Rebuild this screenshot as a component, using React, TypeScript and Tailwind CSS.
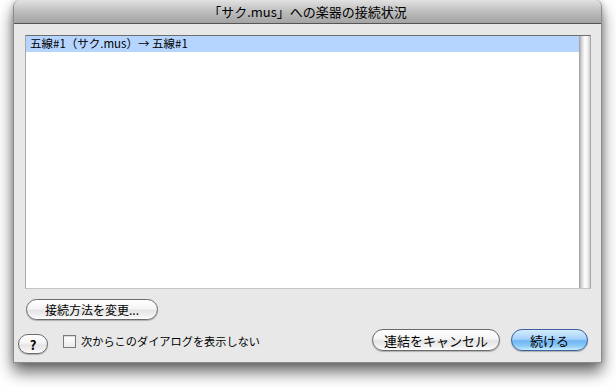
import React from "react";

const font = { fontFamily: '"Lucida Grande", "Noto Sans CJK JP", "Noto Sans", sans-serif' };

const AquaButton = ({
  children,
  className = "",
  primary = false,
}: {
  children: React.ReactNode;
  className?: string;
  primary?: boolean;
}) => (
  <button
    className={
      "flex items-center justify-center rounded-full border text-[12px] leading-none text-black shadow-[0_1px_1px_rgba(0,0,0,0.25)] " +
      (primary
        ? "border-[#3c5f9e] bg-[linear-gradient(to_bottom,#d4ecff_0%,#a6d2fb_45%,#6fb4f3_55%,#8ccaf8_80%,#c8eeff_100%)] "
        : "border-[#6b6b6b] bg-[linear-gradient(to_bottom,#ffffff_0%,#f4f4f4_45%,#e4e4e4_55%,#f2f2f2_85%,#ffffff_100%)] ") +
      className
    }
    style={font}
  >
    {children}
  </button>
);

export default function App() {
  return (
    <div className="h-[387px] w-[616px] overflow-hidden bg-white" style={font}>
      <div className="ml-[13px] flex h-[363px] w-[589px] flex-col overflow-hidden rounded-t-[7px] border-x border-b border-[#8c8c8c] bg-[#e8e8e8] shadow-[0_9px_16px_rgba(0,0,0,0.6),0_0_6px_rgba(0,0,0,0.2)]">
        {/* title bar */}
        <div className="flex h-[24px] shrink-0 items-center justify-center border-b border-[#555] bg-[linear-gradient(to_bottom,#e2e2e2,#bdbdbd_50%,#a4a4a4)] text-[13px] text-black">
          「サク.mus」への楽器の接続状況
        </div>

        {/* body */}
        <div className="flex flex-1 flex-col pl-[11px] pr-[10px] pt-[11px]">
          <div className="flex h-[254px] border border-t-[#6e6e6e] border-x-[#a8a8a8] border-b-[#c4c4c4] bg-white">
            <div className="flex-1">
              <div className="flex h-[16px] items-center bg-[#b5d5ff] pl-[4px] text-[11.5px] leading-none text-black">
                五線#1（サク.mus）→ 五線#1
              </div>
            </div>
            <div className="w-[11px] bg-[linear-gradient(to_right,#9d9d9d,#d6d6d6_25%,#ffffff_55%,#f2f2f2_75%,#cfcfcf)]" />
          </div>

          <div className="mt-[10px] flex">
            <AquaButton className="ml-[1px] h-[21px] w-[132px]">接続方法を変更...</AquaButton>
          </div>

          <div className="mt-[9px] flex items-start">
            <AquaButton className="mt-[5px] ml-[-7px] h-[20px] w-[30px] text-[13px] font-bold">?</AquaButton>
            <div className="ml-[15px] mt-[6px] flex items-center">
              <div className="h-[13px] w-[13px] border border-[#7a7a7a] bg-[linear-gradient(to_bottom,#fefefe,#ececec)] shadow-[inset_0_1px_1px_rgba(0,0,0,0.15)]" />
              <span className="ml-[5px] text-[11.2px] leading-none text-black">次からこのダイアログを表示しない</span>
            </div>
            <div className="ml-auto flex gap-[11px]">
              <AquaButton className="h-[22px] w-[128px] text-[13px]">連結をキャンセル</AquaButton>
              <AquaButton primary className="mr-[3px] h-[22px] w-[77px] text-[13px]">続ける</AquaButton>
            </div>
          </div>
        </div>
      </div>
    </div>
  );
}
